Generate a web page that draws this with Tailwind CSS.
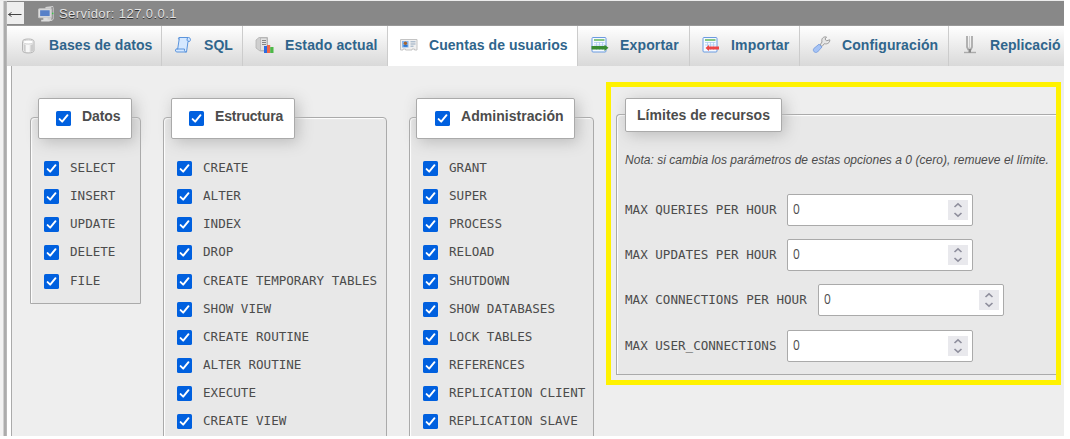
<!DOCTYPE html>
<html lang="es">
<head>
<meta charset="utf-8">
<title>Servidor: 127.0.0.1</title>
<script src="https://cdn.jsdelivr.net/npm/@tailwindcss/browser@4"></script>
</head>
<body class="bg-white overflow-hidden font-['Liberation_Sans',sans-serif] text-[#4c4c4c]">
<svg class="hidden">
  <symbol id="check" viewBox="0 0 15 15"><rect width="15" height="15" rx="1.6" fill="#0060df"/><path d="M3.600 8.100 6.200 10.700 11.500 4.200" fill="none" stroke="#fff" stroke-width="1.900" stroke-linecap="round" stroke-linejoin="round"/></symbol>
  <linearGradient id="cyl"><stop offset="0" stop-color="#c4c4c4"/><stop offset=".4" stop-color="#fafafa"/><stop offset="1" stop-color="#bdbdbd"/></linearGradient>
</svg>
<div class="w-[1064px] h-[436px] flex overflow-hidden border-t border-[#ececec]">
  <div class="w-[7px] shrink-0 bg-[#f2f2f2] flex justify-end"><div class="w-[4px] bg-[#acacac] border-l border-[#d0d0d0] border-r border-r-[#b8b8b8]"></div></div>
  <div class="w-[1057px] shrink-0 flex flex-col">
    <header class="h-[25px] shrink-0 bg-[#888] flex border-b border-[#999]">
      <div class="mt-px w-[17px] h-[22px] bg-[#eee] flex items-center">
        <svg class="w-[17px] h-[12px]" viewBox="0 0 17 12"><path d="M1.500 7.500H14.500M1.500 7.500 4.500 5.500M1.500 7.500 4.500 9.500" stroke="#444" fill="none" stroke-width="1"/></svg>
      </div>
      <svg class="ml-[14px] mt-[5px] w-[17px] h-[17px]" viewBox="0 0 16 16"><path d="M7 1 14 0 15 2V12L13 14H7Z" fill="#d2d2d2"/><path d="M12.500 1H14.500V12L12.500 13.500Z" fill="#999"/><path d="M12.500 7h2" stroke="#3c4" stroke-width="1.300"/><rect x=".5" y="2.500" width="12" height="8.500" rx="1" fill="#ddd" stroke="#c4c4c4"/><rect x="2" y="4" width="9" height="5.500" fill="#5780c8"/><path d="M5 11h4v2h2v1.500H3V13h2Z" fill="#ddd"/></svg>
      <span class="ml-[4px] mt-[4px] text-[13px] leading-[18px] tracking-[0.42px] text-[#e4e4e4] [text-shadow:0_1px_0_#333]">Servidor: 127.0.0.1</span>
    </header>
    <nav class="h-[40px] shrink-0 flex overflow-hidden text-[14px] font-bold text-[#2f658c] tracking-[0.05px]">
      <a class="w-[155px] shrink-0 flex items-center pl-[14px] border-r border-[#ccc] bg-linear-to-b from-white to-[#d9d9d9]">
        <svg class="w-[16px] h-[18px] mr-[12px] shrink-0" viewBox="0 0 16 18"><path d="M1.500 4.500C1.500 2.800 4 2 7.300 2S13 2.800 13 4.500V13.500C13 15.200 10.500 16 7.300 16S1.500 15.200 1.500 13.500Z" fill="url(#cyl)" stroke="#b5b5b5"/><path d="M2 5C2 2.500 12.500 2.500 12.500 5S2 7.500 2 5Z" fill="#fff" stroke="#c6c6c6" stroke-width=".7"/><path d="M2.500 7C3 9 2.500 12 3 14L4.500 15V8Z" fill="#ccc"/><path d="M5 8V15H8.500V8Z" fill="#f7f7f7"/><path d="M9.500 8V15L12.300 14V7Z" fill="#ccc"/></svg><span class="pb-[2px] whitespace-nowrap">Bases de datos</span></a>
      <a class="w-[81px] shrink-0 flex items-center pl-[12px] border-r border-[#ccc] bg-linear-to-b from-white to-[#d9d9d9]">
        <svg class="w-[18px] h-[18px] mr-[12px] mb-[2px] shrink-0" viewBox="0 0 18 18"><path d="M5 1.500H14.500C17 1.500 17 5.500 15 5.500H14L12.500 16H3C1 16 1 13 2.500 13H3.700L5.200 3Z" fill="#d5e8ff" stroke="#5b94dc"/><path d="M2.500 13H10.500C10 15 11 16 12.500 16M5 1.500C4 2 4.500 3.500 5.200 3.500" fill="none" stroke="#5b94dc"/><path d="M13.500 2C12.500 3.500 13 5.500 15 5.500" stroke="#5b94dc" fill="#a8ccf6"/></svg><span class="pb-[2px] whitespace-nowrap">SQL</span></a>
      <a class="w-[145px] shrink-0 flex items-center pl-[12px] border-r border-[#ccc] bg-linear-to-b from-white to-[#d9d9d9]">
        <svg class="w-[19px] h-[18px] mr-[11px] mb-[2px] shrink-0" viewBox="0 0 19 18"><path d="M1 4 4 1.500H12.500V15H5L1 12Z" fill="#cfcfcf" stroke="#b2b2b2" stroke-width=".8"/><path d="M5.500 2H12V14.500H5.500Z" fill="#e3e3e3" stroke="#aaa" stroke-width=".6"/><path d="M7 4.500h4M7 6.500h4M7 8.500h4" stroke="#888"/><path d="M9 10h3v7H9z" fill="#2b6be0"/><path d="M12 9h3.200v8H12z" fill="#f0674a"/><path d="M15.200 11H18.500v6h-3.300z" fill="#4db848"/></svg><span class="pb-[2px] whitespace-nowrap tracking-[0.12px]">Estado actual</span></a>
      <a class="w-[190px] shrink-0 flex items-center pl-[12px] border-r border-[#ccc] bg-white">
        <svg class="w-[18px] h-[14px] mr-[11px] mb-[2px] shrink-0" viewBox="0 0 18 14"><path d="M.5 1.500H17V12H14.500V11H12V12H5.500V11H3V12H.5Z" fill="#f0f0f0" stroke="#c4c4c4"/><path d="M2 3h6.500v6.500H2z" fill="#85b6ee"/><path d="M3.500 8.800H7.500V6.800H3.500Z" fill="#2d75cf"/><circle cx="5.400" cy="5.300" r="1.700" fill="#a8642d"/><path d="M10.500 3.800h5M10.500 6h5M10.500 8.200h3" stroke="#92a7be"/></svg><span class="pb-[2px] whitespace-nowrap">Cuentas de usuarios</span></a>
      <a class="w-[112px] shrink-0 flex items-center pl-[12px] border-r border-[#ccc] bg-linear-to-b from-white to-[#d9d9d9]">
        <svg class="w-[19px] h-[18px] mr-[11px] mb-[2px] shrink-0" viewBox="0 0 19 18"><rect x="2" y="1.500" width="14" height="14.500" rx="1" fill="#f5faff" stroke="#6b9be0"/><path d="M4 4h10.500" stroke="#58b04d" stroke-width="1.400"/><path d="M4 6.500H14.500M4 9H14.500M6.500 6V14M9.500 6V14M12.500 6V14" stroke="#aecbf2" stroke-width=".8"/><path d="M1.500 10H14.500V8.800L18.500 11.800 14.500 15V13.500H1.500Z" fill="#398c32"/></svg><span class="pb-[2px] whitespace-nowrap tracking-[0.15px]">Exportar</span></a>
      <a class="w-[110px] shrink-0 flex items-center pl-[11px] border-r border-[#ccc] bg-linear-to-b from-white to-[#d9d9d9]">
        <svg class="w-[19px] h-[18px] mr-[11px] mb-[2px] shrink-0" viewBox="0 0 19 18"><rect x="2" y="1.500" width="14" height="14.500" rx="1" fill="#f5faff" stroke="#6b9be0"/><path d="M4 4h10.500" stroke="#58b04d" stroke-width="1.400"/><path d="M4 6.500H14.500M4 9H14.500M6.500 6V14M9.500 6V14M12.500 6V14" stroke="#aecbf2" stroke-width=".8"/><path d="M18 10.500H8V9L4.500 12 8 15V13.500H18Z" fill="#ed4545"/></svg><span class="pb-[2px] whitespace-nowrap tracking-[0.2px]">Importar</span></a>
      <a class="w-[149px] shrink-0 flex items-center pl-[12px] border-r border-[#ccc] bg-linear-to-b from-white to-[#d9d9d9]">
        <svg class="w-[19px] h-[19px] mr-[11px] mb-[4px] shrink-0" viewBox="0 0 19 19"><path d="M8 10 10 7C9 3.500 11.500 1.300 14.500 2L13 4 14.500 5.800 17.800 4.800C18 8 15 9.500 12.300 8.700L10 11.500Z" fill="#e6e6e6" stroke="#9c9c9c"/><path d="M1.800 13.500 7 9.200 10 12 5.500 17C3 18.500.2 16 1.800 13.500Z" fill="#a6c3f5" stroke="#6f97dc" stroke-width=".8"/></svg><span class="pb-[2px] whitespace-nowrap tracking-[0.1px]">Configuración</span></a>
      <a class="w-[116px] shrink-0 flex items-center pl-[13px] bg-linear-to-b from-white to-[#d9d9d9]">
        <svg class="w-[16px] h-[19px] mr-[12px] mb-[3px] shrink-0" viewBox="0 0 16 19"><path d="M5 1V12L6.500 15M10 1V12L8.500 15" fill="none" stroke="#aaa" stroke-width="1.800"/><path d="M7.500 1V15" stroke="#ccc"/><path d="M2 17.500H14" stroke="#aaa" stroke-width="1.400"/><path d="M6.500 14h2.500v3.500H6.500z" fill="#888"/></svg><span class="pb-[2px] whitespace-nowrap">Replicació</span></a>
    </nav>
    <main class="grow flex border-l-[4px] border-white">
      <div class="grow flex items-start bg-[#eee] border-l border-[#aaa] pl-[18px] font-['DejaVu_Sans_Mono',monospace]">
        <section class="w-[111px] h-[187px] shrink-0 mt-[51px] border border-[#aaa] rounded-t bg-[#e8e8e8] [box-shadow:inset_1px_1px_1px_#fff]">
          <h2 class="-mt-[20px] ml-[7px] w-[94px] h-[41px] bg-white border border-[#aaa] rounded-[2px] shadow-[3px_3px_15px_#bbb] flex pl-[17px] pt-[12px] font-['Liberation_Sans',sans-serif] font-bold text-[14px] leading-[11px] tracking-[-0.1px]">
            <svg class="w-[15px] h-[15px] mr-[11px]"><use href="#check"/></svg>Datos</h2>
          <ul class="mt-[22px] ml-[13px]" data-rows="SELECT,INSERT,UPDATE,DELETE,FILE"></ul>
        </section>
        <section class="ml-[22px] w-[224px] h-[340px] shrink-0 mt-[51px] border border-[#aaa] rounded-t bg-[#e8e8e8] [box-shadow:inset_1px_1px_1px_#fff]">
          <h2 class="-mt-[20px] ml-[7px] w-[124px] h-[41px] bg-white border border-[#aaa] rounded-[2px] shadow-[3px_3px_15px_#bbb] flex pl-[17px] pt-[12px] font-['Liberation_Sans',sans-serif] font-bold text-[14px] leading-[11px] tracking-[-0.2px]">
            <svg class="w-[15px] h-[15px] mr-[11px]"><use href="#check"/></svg>Estructura</h2>
          <ul class="mt-[22px] ml-[13px]" data-rows="CREATE,ALTER,INDEX,DROP,CREATE TEMPORARY TABLES,SHOW VIEW,CREATE ROUTINE,ALTER ROUTINE,EXECUTE,CREATE VIEW"></ul>
        </section>
        <section class="ml-[22px] w-[185px] h-[340px] shrink-0 mt-[51px] border border-[#aaa] rounded-t bg-[#e8e8e8] [box-shadow:inset_1px_1px_1px_#fff]">
          <h2 class="-mt-[20px] ml-[6px] w-[159px] h-[41px] bg-white border border-[#aaa] rounded-[2px] shadow-[3px_3px_15px_#bbb] flex pl-[18px] pt-[12px] font-['Liberation_Sans',sans-serif] font-bold text-[14px] leading-[11px] tracking-[0.05px]">
            <svg class="w-[15px] h-[15px] mr-[11px]"><use href="#check"/></svg>Administración</h2>
          <ul class="mt-[22px] ml-[13px]" data-rows="GRANT,SUPER,PROCESS,RELOAD,SHUTDOWN,SHOW DATABASES,LOCK TABLES,REFERENCES,REPLICATION CLIENT,REPLICATION SLAVE"></ul>
        </section>
        <div class="ml-[12px] mt-[16px] w-[455px] h-[303px] shrink-0 border-[5px] border-[#fff200] pl-[5px] pt-[27px] pb-[5px]">
          <section class="h-[261px] border border-r-0 border-[#aaa] rounded-tl bg-[#e8e8e8] [box-shadow:inset_1px_1px_1px_#fff]">
            <h2 class="-mt-[17px] ml-[8px] w-[157px] h-[34px] bg-white border border-[#aaa] rounded-[2px] shadow-[3px_3px_15px_#bbb] flex pl-[11px] pt-[11px] font-['Liberation_Sans',sans-serif] font-bold text-[14px] leading-[11px] whitespace-nowrap tracking-[0.04px]">Límites de recursos</h2>
            <p class="ml-[8px] mt-[20px] font-['Liberation_Sans',sans-serif] italic text-[12px] leading-[16px] tracking-[0.03px] whitespace-nowrap">Nota: si cambia los parámetros de estas opciones a 0 (cero), remueve el límite.</p>
            <ul id="limits" class="mt-[26px] ml-[8px]"></ul>
          </section>
        </div>
      </div>
    </main>
  </div>
</div>
<script>
document.querySelectorAll('[data-rows]').forEach(ul => {
  ul.innerHTML = ul.dataset.rows.split(',').map(t =>
    `<li class="h-[28.13px] flex items-start"><svg class="w-[15px] h-[15px] mr-[11px] shrink-0"><use href="#check"/></svg><span class="text-[12.58px] leading-[14px] whitespace-nowrap">${t}</span></li>`).join('');
});
document.getElementById('limits').innerHTML =
  ['MAX QUERIES PER HOUR', 'MAX UPDATES PER HOUR', 'MAX CONNECTIONS PER HOUR', 'MAX USER_CONNECTIONS'].map(t =>
    `<li class="h-[45.2px] flex items-start"><span class="text-[12.58px] leading-[32px] whitespace-nowrap mr-[11px]">${t}</span><span class="w-[186px] h-[32px] shrink-0 bg-white border border-[#aaa] rounded-[2px] flex justify-between pl-[5px] pr-[4px] pt-[5px]"><span class="font-['Open_Sans',sans-serif] text-[14px] leading-[18px] origin-left scale-x-85">0</span><svg class="w-[20px] h-[20px]" viewBox="0 0 20 20"><rect width="20" height="20" fill="#e9e9ed"/><path d="M6.500 7 10 3.800 13.500 7M6.500 13 10 16.200 13.500 13" fill="none" stroke="#8f8f9d" stroke-width="1.600"/></svg></span></li>`).join('');
</script>
</body>
</html>
